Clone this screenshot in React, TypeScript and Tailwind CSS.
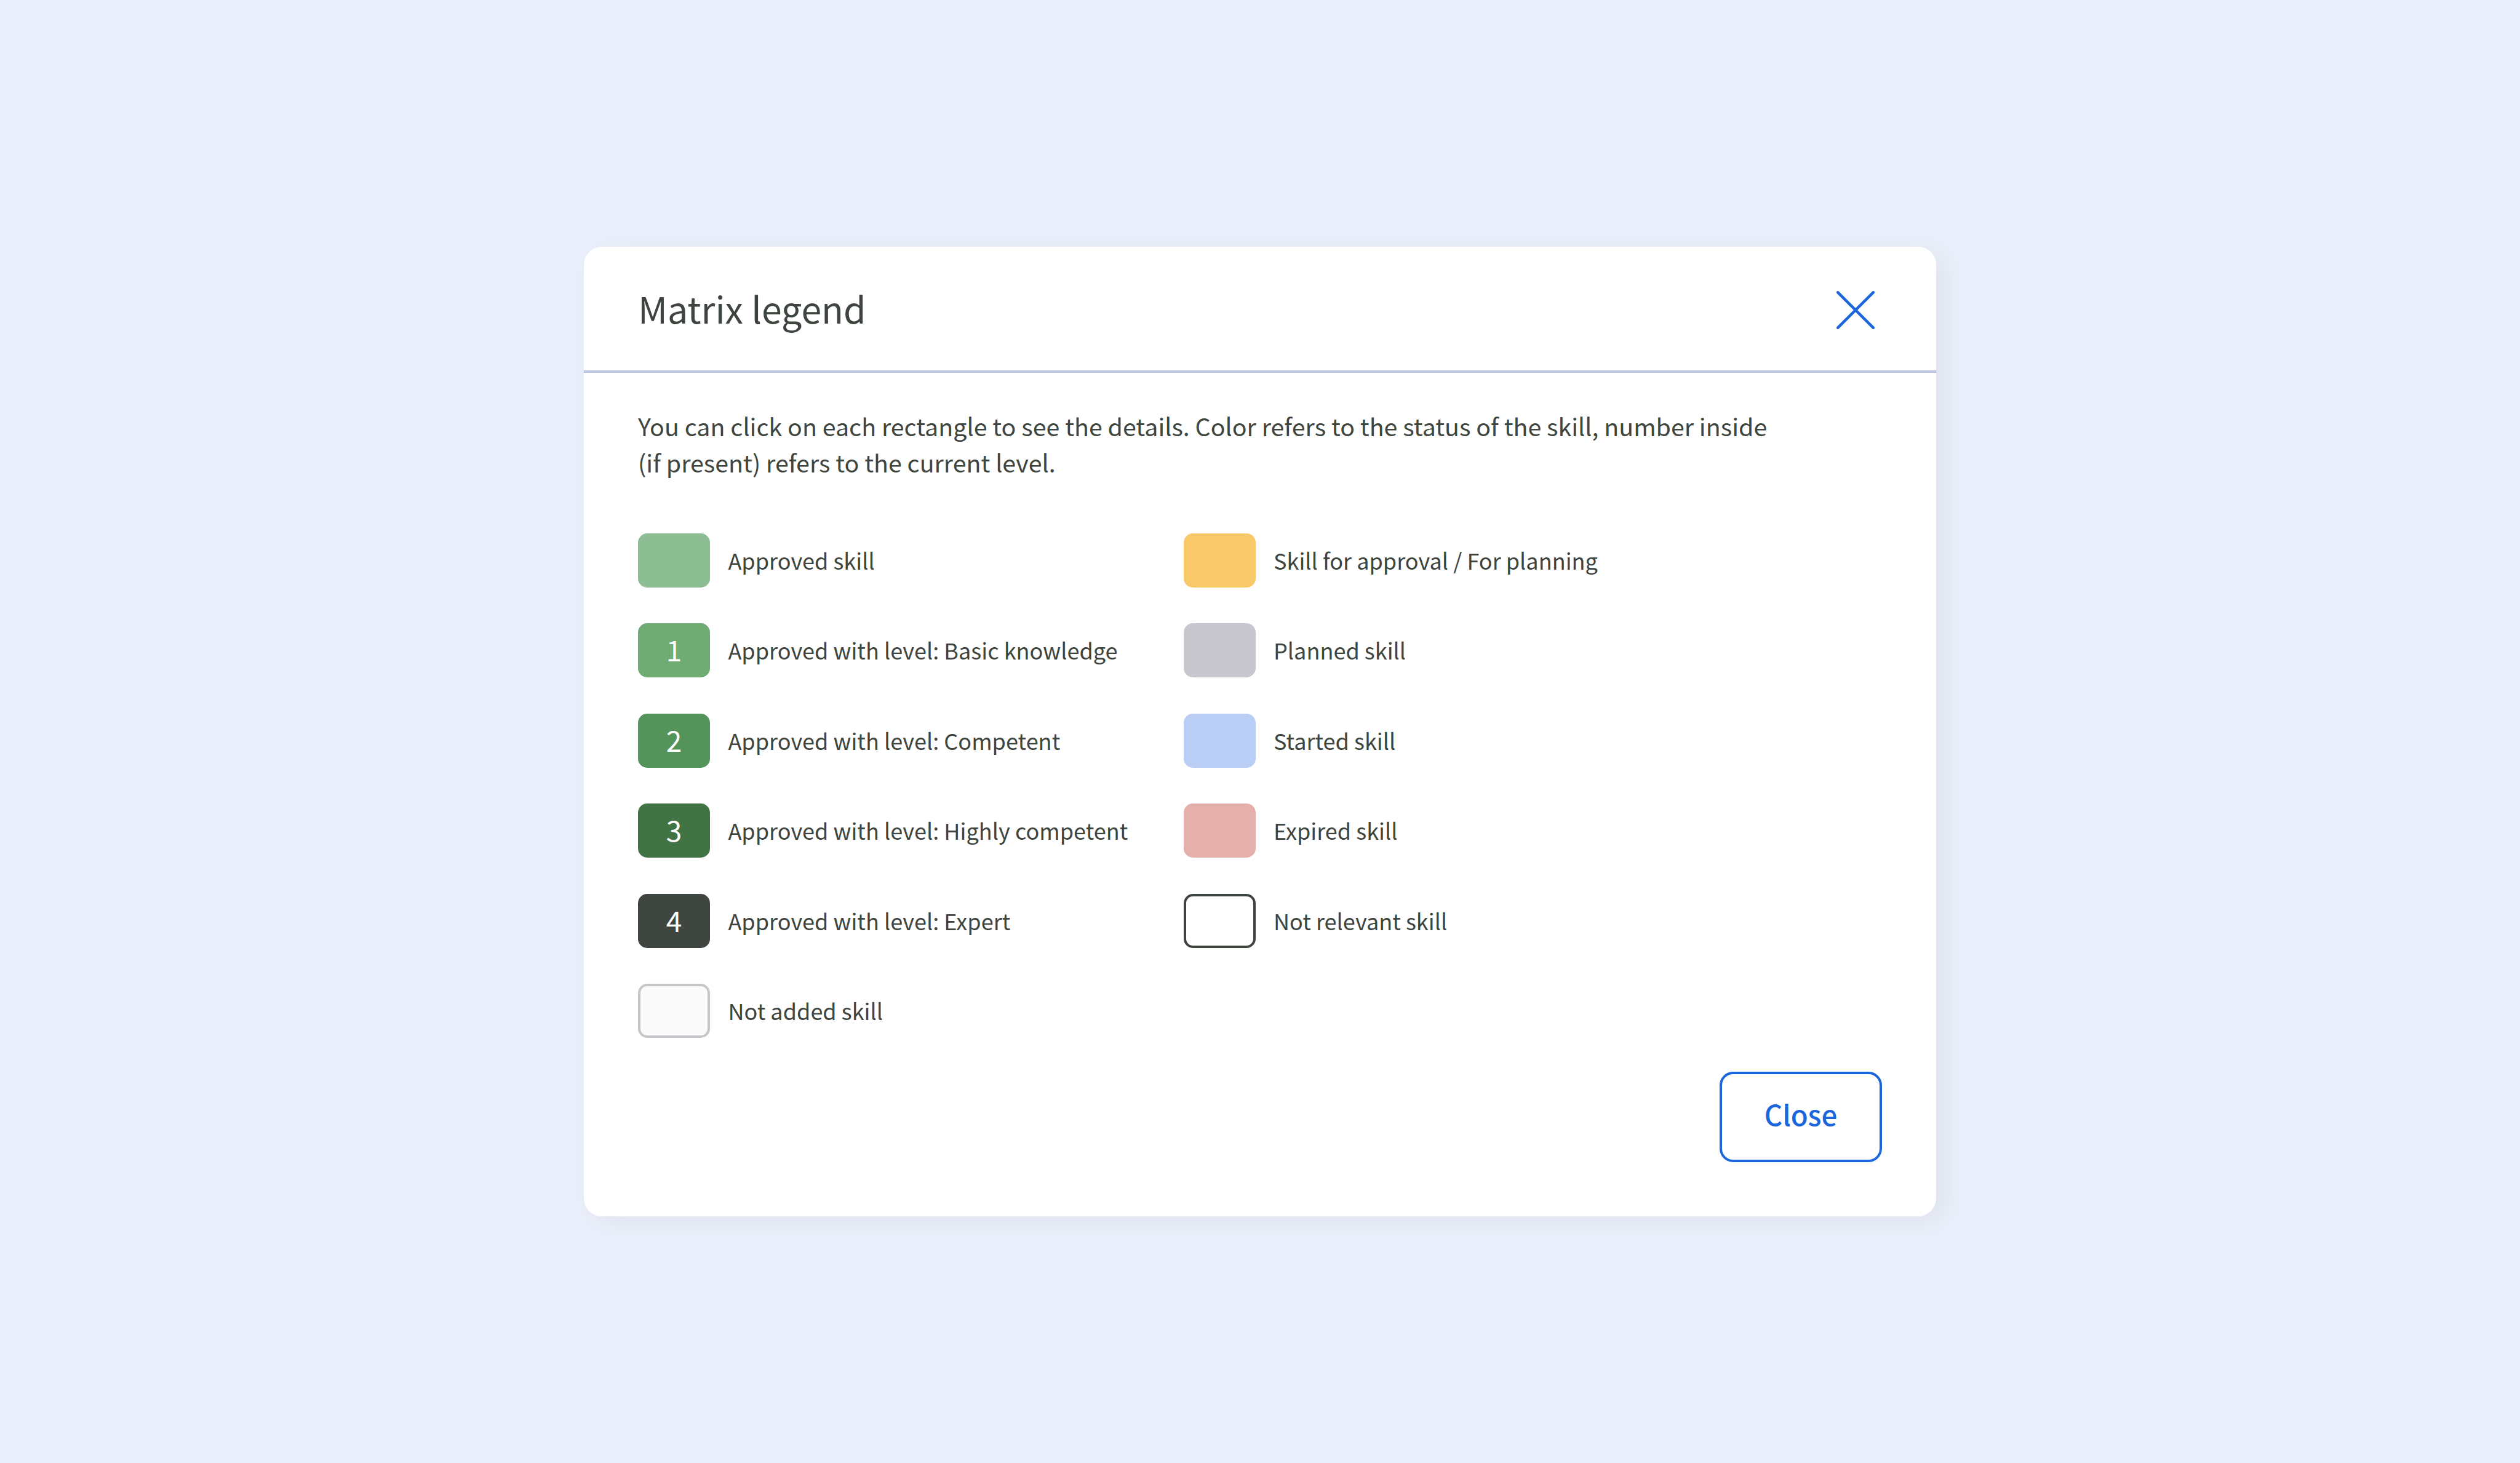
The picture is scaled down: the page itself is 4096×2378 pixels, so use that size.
interface LegendItem {
  label: string;
  swatch: string;
  level?: number;
}

const approvedItems: LegendItem[] = [
  { label: "Approved skill", swatch: "bg-[#8dbd93]" },
  { label: "Approved with level: Basic knowledge", swatch: "bg-[#6eac74]", level: 1 },
  { label: "Approved with level: Competent", swatch: "bg-[#549359]", level: 2 },
  { label: "Approved with level: Highly competent", swatch: "bg-[#427345]", level: 3 },
  { label: "Approved with level: Expert", swatch: "bg-[#3e463f]", level: 4 },
  { label: "Not added skill", swatch: "bg-[#fafafa] border-4 border-[#c5c5ca]" },
];

const otherItems: LegendItem[] = [
  { label: "Skill for approval / For planning", swatch: "bg-[#f8c969]" },
  { label: "Planned skill", swatch: "bg-[#c8c7cd]" },
  { label: "Started skill", swatch: "bg-[#bacef5]" },
  { label: "Expired skill", swatch: "bg-[#e5b0ac]" },
  { label: "Not relevant skill", swatch: "bg-white border-4 border-[#3e443e]" },
];

function LegendRow({ item }: { item: LegendItem }) {
  return (
    <li className="flex h-[88px] items-center gap-[29.4px]">
      <span
        className={`flex h-[88px] w-[117px] shrink-0 items-center justify-center rounded-[15px] text-[46px] leading-none text-white ${item.swatch}`}
      >
        {item.level && <span className="pb-[4px]">{item.level}</span>}
      </span>
      <span className="pb-[2px] text-[36.08px] leading-none whitespace-nowrap">{item.label}</span>
    </li>
  );
}

function LegendColumn({ items, className }: { items: LegendItem[]; className: string }) {
  return (
    <ul className={`flex flex-col gap-[58.55px] ${className}`}>
      {items.map(item => (
        <LegendRow key={item.label} item={item} />
      ))}
    </ul>
  );
}

export default function App() {
  return (
    <div className="flex h-[2378px] w-[4096px] items-start justify-center overflow-hidden bg-[#ebeffb] pt-[401px] font-['Noto_Sans_CJK_SC',sans-serif] text-[#3e443e]">
      <div className="flex h-[1576px] w-[2198px] flex-col rounded-[29px] bg-white shadow-[15px_8px_40px_rgba(62,68,62,0.07)]">
        {/* Header */}
        <div className="flex h-[205px] shrink-0 items-center justify-between border-b-4 border-[#bec5e0] pr-[100px] pl-[88px]">
          <h2 className="pb-[3px] text-[59px] leading-none">Matrix legend</h2>
          <button type="button" aria-label="Close dialog" className="pt-[4px]">
            <svg className="h-[62px] w-[62px]" viewBox="0 0 62 62" fill="none" stroke="#1b66dd" strokeWidth="4.6" strokeLinecap="round">
              <path d="M2.3 2.3 59.7 59.7M59.7 2.3 2.3 59.7" />
            </svg>
          </button>
        </div>

        {/* Body */}
        <div className="flex grow flex-col px-[88px] pt-[57px] pb-[88px]">
          <p className="text-[39.38px] leading-[58.6px]">
            You can click on each rectangle to see the details. Color refers to the status of the skill, number inside
            <br />
            (if present) refers to the current level.
          </p>

          <div className="mt-[86.4px] flex">
            <LegendColumn items={approvedItems} className="w-[886.6px]" />
            <LegendColumn items={otherItems} className="" />
          </div>

          <div className="mt-auto flex justify-end">
            <button
              type="button"
              className="flex h-[147px] w-[264px] items-center justify-center rounded-[22px] border-4 border-[#1b66dd] pb-[10px] text-[45.6px] leading-none font-medium text-[#1b66dd]"
            >
              Close
            </button>
          </div>
        </div>
      </div>
    </div>
  );
}
